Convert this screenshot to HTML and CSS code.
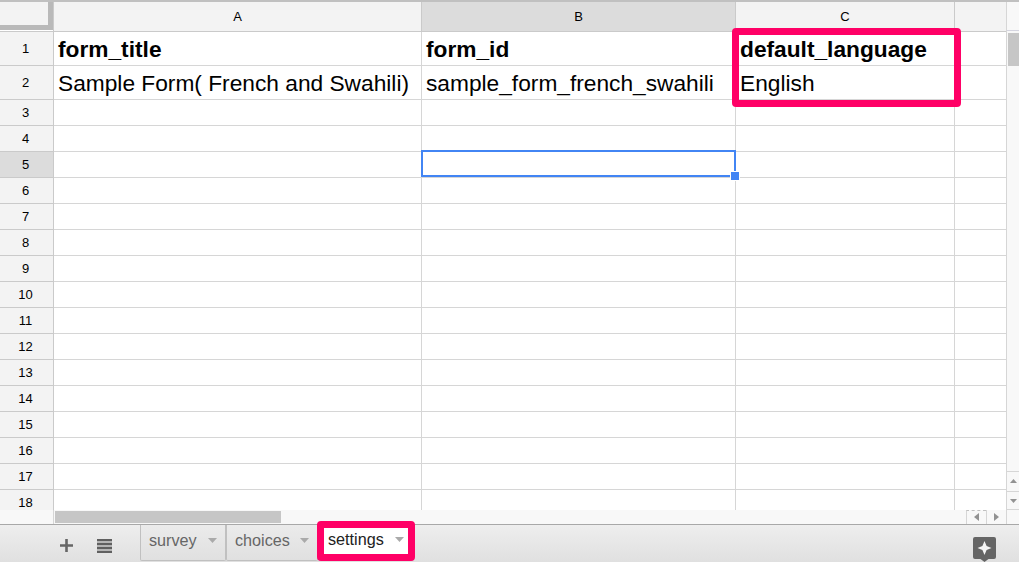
FILE: index.html
```html
<!DOCTYPE html>
<html lang="en">
<head>
<meta charset="utf-8">
<title>Sample Form</title>
<link rel="stylesheet" href="styles.css">
</head>
<body>
<div class="app">
  <div class="main">
    <div class="left">
      <div class="sheet">
        <div class="row head"><div class="corner"></div><div>A</div><div class="active">B</div><div>C</div><div></div></div>
        <div class="row tall bold"><div class="num">1</div><div>form_title</div><div>form_id</div><div>default_language</div><div></div></div>
        <div class="row tall"><div class="num">2</div><div>Sample Form( French and Swahili)</div><div>sample_form_french_swahili</div><div>English</div><div></div></div>
        <div class="row"><div class="num">3</div><div></div><div></div><div></div><div></div></div>
        <div class="row"><div class="num">4</div><div></div><div></div><div></div><div></div></div>
        <div class="row"><div class="num active">5</div><div></div><div class="selected"><span class="outline"></span><span class="handle"></span></div><div></div><div></div></div>
        <div class="row"><div class="num">6</div><div></div><div></div><div></div><div></div></div>
        <div class="row"><div class="num">7</div><div></div><div></div><div></div><div></div></div>
        <div class="row"><div class="num">8</div><div></div><div></div><div></div><div></div></div>
        <div class="row"><div class="num">9</div><div></div><div></div><div></div><div></div></div>
        <div class="row"><div class="num">10</div><div></div><div></div><div></div><div></div></div>
        <div class="row"><div class="num">11</div><div></div><div></div><div></div><div></div></div>
        <div class="row"><div class="num">12</div><div></div><div></div><div></div><div></div></div>
        <div class="row"><div class="num">13</div><div></div><div></div><div></div><div></div></div>
        <div class="row"><div class="num">14</div><div></div><div></div><div></div><div></div></div>
        <div class="row"><div class="num">15</div><div></div><div></div><div></div><div></div></div>
        <div class="row"><div class="num">16</div><div></div><div></div><div></div><div></div></div>
        <div class="row"><div class="num">17</div><div></div><div></div><div></div><div></div></div>
        <div class="row"><div class="num">18</div><div></div><div></div><div></div><div></div></div>
      </div>
      <div class="hscroll">
        <div class="hpad"></div>
        <div class="htrack"><div class="hthumb"></div></div>
        <div class="hbtn dashed"><svg width="5" height="8" viewBox="0 0 5 8"><path d="M5 0v8L0 4z"/></svg></div>
        <div class="hbtn"><svg width="5" height="8" viewBox="0 0 5 8"><path d="M0 0v8l5-4z"/></svg></div>
      </div>
    </div>
    <div class="vscroll">
      <div class="vhead"></div>
      <div class="vtrack"><div class="vthumb"></div></div>
      <div class="vbtn"><svg width="7" height="4" viewBox="0 0 7 4"><path d="M0 4h7L3.500 0z"/></svg></div>
      <div class="vbtn"><svg width="7" height="4" viewBox="0 0 7 4"><path d="M0 0h7L3.500 4z"/></svg></div>
      <div class="vend"></div>
    </div>
    <div class="mark mark-cells"></div>
  </div>
  <div class="footer">
    <svg class="add" width="13" height="13" viewBox="0 0 13 13"><path d="M5.200 0h2.600v5.200H13v2.600H7.800V13H5.200V7.800H0V5.200h5.200z"/></svg>
    <svg class="list" width="15" height="14" viewBox="0 0 15 14"><path fill="#b5b5b5" d="M0 0h15v14H0z"/><path fill="#606060" d="M0 0h15v2H0zM0 4h15v2H0zM0 8h15v2H0zM0 12h15v2H0z"/></svg>
    <div class="tabs">
      <div class="tab survey"><span>survey</span><i class="caret"></i></div>
      <div class="tab choices"><span>choices</span><i class="caret"></i></div>
      <div class="tab current"><span>settings</span><i class="caret"></i></div>
    </div>
    <svg class="explore" width="23" height="25" viewBox="0 0 23 25"><path fill="#656565" d="M2 0h19a2 2 0 0 1 2 2v18a2 2 0 0 1-2 2h-5.500l-4 3-4-3H2a2 2 0 0 1-2-2V2a2 2 0 0 1 2-2z"/><path fill="#f5f5f5" d="M11.500 4l2.100 4.900 4.900 2.100-4.900 2.100-2.100 4.900-2.100-4.900L4.500 11l4.900-2.100z"/></svg>
  </div>
</div>
</body>
</html>
```

FILE: styles.css
```css
* { box-sizing: border-box; }
body { margin: 0; background: #fff; font-family: "Liberation Sans", Arial, sans-serif; color: #000; }
.app { width: 1019px; height: 562px; display: flex; flex-direction: column; overflow: hidden; border-top: 2px solid #c0c0c0; }
.main { height: 522px; display: flex; position: relative; }
.left { width: 1006px; }
.sheet { height: 508px; overflow: hidden; }
.row { display: grid; grid-template-columns: 54px 368px 314px 219px 51px; grid-template-rows: 100%; height: 26px; }
.row > div { border-right: 1px solid #d6d6d6; border-bottom: 1px solid #d6d6d6; white-space: nowrap; }
.row > div:last-child { border-right: 0; }
.row > .num { background: #f3f3f3; border-color: #cacaca; font-size: 13px; font-weight: 400; line-height: 25px; text-align: center; padding-right: 2px; }
.head { height: 30px; }
.head > div { background: #f3f3f3; border-color: #cacaca; font-size: 13px; line-height: 29px; text-align: center; }
.head > .corner { box-shadow: inset 0 -1px #fff, inset -5px -6px #b9b9b9; }
.row > .active { background: #dcdcdc; }
.tall { height: 34px; font-size: 22.72px; line-height: 35px; }
.tall > div { padding-left: 4px; }
.tall > .num { line-height: 33px; padding-left: 0; }
.bold { font-weight: 700; }
.selected { position: relative; }
.outline { position: absolute; left: -1px; top: -2px; width: 315px; height: 27px; border: 2px solid #4285f4; }
.handle { position: absolute; right: -5px; bottom: -4px; width: 10px; height: 10px; background: #4285f4; border: 1px solid #fff; z-index: 2; }
.hscroll { height: 14px; display: flex; background: #f8f8f8; }
.hpad { width: 54px; border-right: 1px solid #d6d6d6; }
.htrack { flex: 1; padding: 1px 0 0 1px; }
.hthumb { width: 226px; height: 12px; background: #c6c6c6; }
.hbtn { width: 20px; border-left: 1px solid #d6d6d6; display: flex; align-items: center; justify-content: center; }
.dashed { border-top: 1px dashed #c0c0c0; padding: 0 1px 1px 0; }
svg { display: block; }
.hbtn svg, .vbtn svg { fill: #929292; }
.vscroll { width: 13px; border-left: 1px solid #d6d6d6; background: #f8f8f8; display: flex; flex-direction: column; overflow: hidden; }
.vhead { height: 29px; border-bottom: 1px solid #d5d5e0; }
.vtrack { flex: 1; padding: 2px 0 0 1px; }
.vthumb { height: 33px; background: #c6c6c6; }
.vbtn { height: 20px; border-top: 1px solid #d6d6d6; display: flex; align-items: center; padding: 0 0 2px 3px; }
.vbtn + .vbtn { height: 18px; padding-bottom: 0; }
.vend { height: 15px; border-top: 1px solid #d6d6d6; }
.mark { border: 7px solid #ff0066; border-radius: 4px; }
.mark-cells { position: absolute; left: 732px; top: 26px; width: 229px; height: 79px; }
.footer { height: 38px; display: flex; border-top: 1px solid #a8a8a8; background: linear-gradient(#eee, #e0e0e0); }
.add { margin: 14px 0 0 60px; fill: #666; }
.list { margin: 14px 0 0 24px; }
.tabs { display: flex; margin-left: 28px; font-size: 16.2px; line-height: 18px; color: #666; }
.tab { height: 36px; padding: 6px 8px 0; border: solid #c0c0c0; border-width: 0 1px 1px; border-radius: 0 0 2px 2px; background: linear-gradient(#ebebeb, #e0e0e0); display: flex; justify-content: space-between; }
.survey { width: 86px; }
.choices { width: 92px; }
.caret { width: 9px; height: 5px; margin-top: 7px; background: #aaa; clip-path: polygon(0 0, 100% 0, 50% 100%); }
.current { position: relative; width: 98px; height: 40px; margin: -4px 0 0 -1px; padding: 2px 4px 0 4px; background: #fff; color: #222; border: 7px solid #ff0066; border-radius: 4px; }
.explore { margin: 12px 23px 0 auto; }
```
